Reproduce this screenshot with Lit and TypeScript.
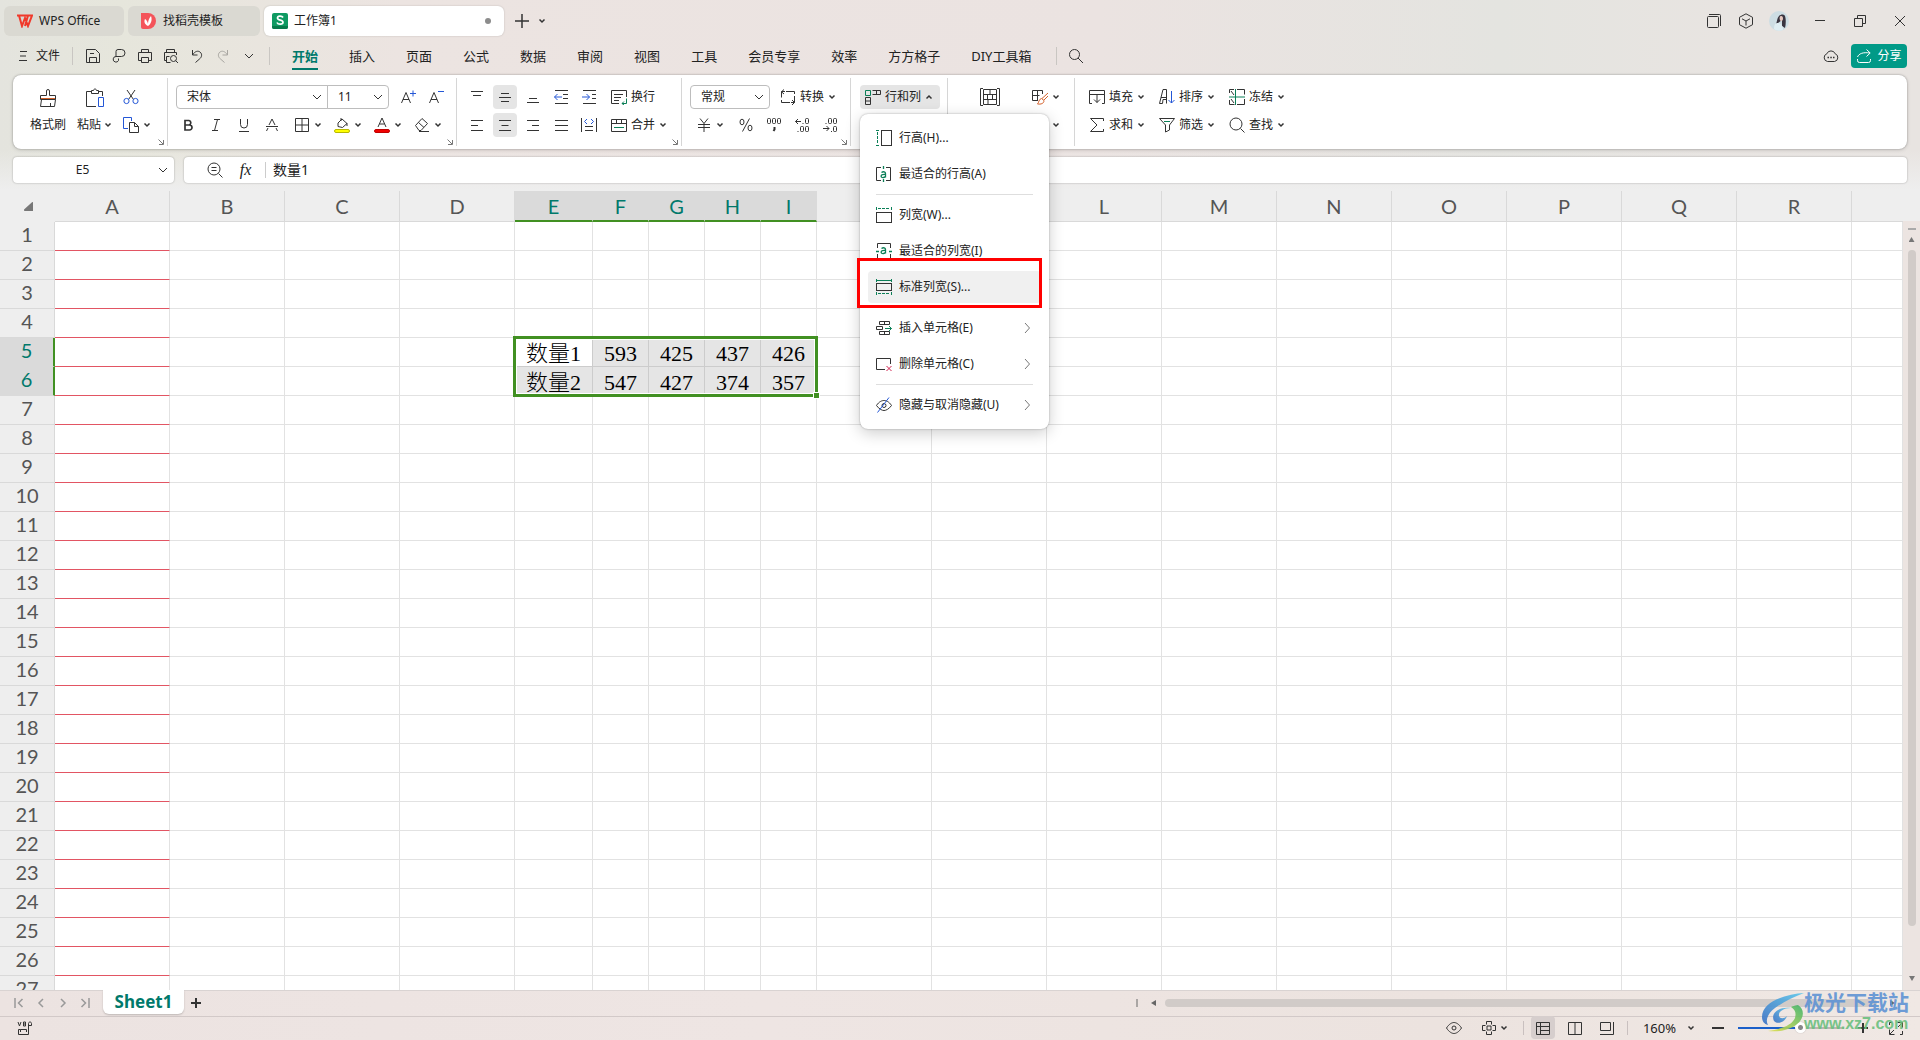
import { LitElement, html, svg, css, nothing } from "lit";
import { customElement, property } from "lit/decorators.js";
import { classMap } from "lit/directives/class-map.js";

const D = "#333";
const BLUE = "#2457d6";
const GREEN = "#0b7f57";

/** Line icons; every entry is drawn on a grid of `size` pixels (16 unless named). */
const ICONS: Record<string, { size?: number; art: unknown }> = {
  save: { art: svg`<path d="M1.5 1.5h9l4 4v9h-13zM4.500 14V9.500h7V14M5 5.500h4"/>` },
  pen: { art: svg`<path d="M5 8.500V3.500a2 2 0 0 1 2-2h3.500a3.200 3.200 0 0 1 0 7H5a2.800 2.800 0 1 0 2.500 4V10.500"/>` },
  print: { art: svg`<path d="M4.500 4.500v-3h7v3M4 12.500H1.500v-8h13v8H12M4.500 9.500h7v5h-7z"/>` },
  preview: { art: svg`<path d="M3.500 4.500v-3h8v3M4 12.500H1.500v-8h12V7M3.500 8.500h3M3.500 8.500v6h4"/><circle cx="10.500" cy="10.500" r="3"/><path d="M12.700 12.700l2.300 2.300"/>` },
  undo: { art: svg`<path d="M3.500 2v5h5M3.500 7C6 3 9 2.500 11 4c2.800 2.200 1.500 5.500-.5 7L6.500 14.500"/>` },
  redo: { art: svg`<path d="M12.500 2v5h-5M12.500 7C10 3 7 2.500 5 4c-2.800 2.200-1.500 5.500.5 7l4 3.500"/>` },
  down: { size: 10, art: svg`<path d="M1 3l4 4 4-4"/>` },
  caret: { size: 8, art: svg`<path d="M1.500 2.500L4 5l2.500-2.500" stroke-width="1.500"/>` },
  caretUp: { size: 8, art: svg`<path d="M1.500 5.500L4 3l2.500 2.500" stroke-width="1.500"/>` },
  menu: { size: 10, art: svg`<path d="M2 .500h7M2 5h6M1 9.500h8"/>` },
  search: { art: svg`<circle cx="6.500" cy="6.500" r="5"/><path d="M10 10l5 5"/>` },
  plus: { size: 14, art: svg`<path d="M7 0v14M0 7h14" stroke-width="1.500"/>` },
  windows: { art: svg`<rect x="1.500" y="3.500" width="11" height="11" rx="1"/><path d="M3 1.500h10.500a1 1 0 0 1 1 1V13"/>` },
  cube: { art: svg`<path d="M8 .800l6.500 3.500v7.400L8 15.200 1.500 11.700V4.300zM4 5.800l4 2.200 4-2.200M8 8v4.500"/>` },
  min: { size: 12, art: svg`<path d="M1 5.500h10"/>` },
  restore: { size: 12, art: svg`<path d="M.500 3.500h8v8h-8zM3.500 3.500v-3h8v8h-3"/>` },
  close: { size: 12, art: svg`<path d="M1 1l10 10M11 1L1 11"/>` },
  cloud: { art: svg`<path d="M4.500 13.500a4 4 0 0 1-.700-7.700 4.500 4.500 0 0 1 8.400 0 4 4 0 0 1-.700 7.700z"/><path d="M4.500 9.500h1.500M7.300 9.500h1.500M10 9.500h1.500" stroke-width="1.500"/>` },
  share: { art: svg`<path d="M1.500 11v1.500a2 2 0 0 0 2 2h9a2 2 0 0 0 2-2V11M1.500 9C3 5.500 7 4 14 5M10.500 1.500L14.200 5l-3.700 3.500" stroke="#fff"/>` },
  launcher: { size: 6, art: svg`<path d="M.500 .500L5 5M5.500 1v4.500H1" stroke="#777"/>` },
  brush: { size: 20, art: svg`<path d="M8.500 7.500V3a1.500 1.500 0 0 1 3 0v4.500h6v4h-15v-4zM3.500 11.500l-1 7h14l1-7M12.500 15v3"/><path d="M3 10.500h14" stroke="#d4622c"/>` },
  paste: { size: 20, art: svg`<path d="M6 3.500H1.500v15H11M14 3.500h3.500V8M6.500 5.500v-3h2c0-2 3-2 3 0h2v3z"/><path d="M13.500 9.500h5v9h-5z" stroke="${BLUE}"/>` },
  cut: { art: svg`<path d="M4 1l6.500 9.500M12 1L5.500 10.500"/><circle cx="3.500" cy="12" r="2.600" stroke="${BLUE}"/><circle cx="12.500" cy="12" r="2.600" stroke="${BLUE}"/>` },
  copy: { art: svg`<path d="M5 11.500H.500V.500h8V4" stroke="${BLUE}"/><path d="M6.500 5.500h5l4 4v6h-9zM11.500 5.500v4h4"/>` },
  fontUp: { art: svg`<path d="M1.500 14L6 3.500 10.500 14M3 10.500h6"/><path d="M10 4.500h6M13 1.500v6" stroke="${BLUE}"/>` },
  fontDown: { art: svg`<path d="M1.500 14L6 3.500 10.500 14M3 10.500h6"/><path d="M10 2.500h6" stroke="${BLUE}"/>` },
  bold: { art: svg`<path d="M5 3.500h4a2.300 2.300 0 0 1 0 4.500H5zM5 8h4.500a2.500 2.500 0 0 1 0 5H5z" stroke-width="1.700"/>` },
  italic: { art: svg`<path d="M6 2.500h6M4 13.500h6M9.500 2.500l-3 11"/>` },
  underline: { art: svg`<path d="M4.500 2v5.500a3.500 3.500 0 0 0 7 0V2M3 14.500h10"/>` },
  strike: { art: svg`<path d="M2 9.500h12M5 8l3-6 3 6M4 11l-1.500 3M12 11l1.500 3"/>` },
  border: { art: svg`<path d="M1.500 1.500h13v13h-13zM8 1.500v13M1.500 8h13"/>` },
  fill: { art: svg`<path d="M4 6l4-4 5 4.500-4.500 4-4.500-1zM7 1v3M13 6v3"/><rect x=".500" y="12.500" width="15" height="3" rx="1.500" fill="#ff0" stroke="#b8b800"/>` },
  color: { art: svg`<path d="M4 10l4-9 4 9M5.500 7h5"/><rect x=".500" y="12.500" width="15" height="3" rx="1.500" fill="#f00000" stroke="#c00000"/>` },
  eraser: { art: svg`<path d="M1.500 8.500l6.500-7 5.500 5-6.500 7H5zM4.500 5.500l5.500 5M5 14.500h10"/>` },
  vTop: { art: svg`<path d="M2 2.500h12M4 6.500h8"/>` },
  vMid: { art: svg`<path d="M4 4.500h8M2 8.500h12M4 12.500h8"/>` },
  vBot: { art: svg`<path d="M4 9.500h8M2 13.500h12"/>` },
  outdent: { art: svg`<path d="M2 1.500h13M10 5.500h5M10 9.500h5M2 14.500h13"/><path d="M9 8H1.500M4.500 5L1.500 8l3 3" stroke="${BLUE}"/>` },
  indent: { art: svg`<path d="M2 1.500h13M11 5.500h4M11 9.500h4M2 14.500h13"/><path d="M1 8h7.500M5.500 5l3 3-3 3" stroke="${BLUE}"/>` },
  left: { art: svg`<path d="M2 3.500h12M2 8.500h7M2 13.500h12"/>` },
  center: { art: svg`<path d="M2 3.500h12M4.500 8.500h7M2 13.500h12"/>` },
  right: { art: svg`<path d="M2 3.500h12M7 8.500h7M2 13.500h12"/>` },
  justify: { art: svg`<path d="M2 3.500h13M2 8.500h13M2 13.500h13"/>` },
  spread: { art: svg`<path d="M.500 1v14M15.500 1v14M4 9.500h8M4 13.500h8"/><path d="M6 2L3.500 4.500 6 7M10 2l2.500 2.500L10 7" stroke="${BLUE}"/>` },
  wrap: { art: svg`<path d="M15.500 8V1.500h-15v13H8M3 5.500h9M3 8.500h7M3 11.500h5"/><path d="M15.500 9.500v5H11M13 12.500l-2 2 2 1.500" stroke="${GREEN}"/>` },
  merge: { art: svg`<path d="M.500 2.500h15v12h-15zM.500 6.500h15M5.500 2.500v4M10.500 2.500v4"/><path d="M3 10.500h10" stroke="${GREEN}"/>` },
  convert: { art: svg`<path d="M1.500 8.500v-6H5M14.500 7v6.500H11M4 .500L1.500 2.800 4 5M6 2.500h8.500V5M12 16l2.500-2.500L12 11M10 13.500H1.500V11"/>` },
  yen: { art: svg`<path d="M4 1.500l4 5 4-5M2 7.500h12M2 10.500h12M8 6.500V15"/>` },
  percent: { art: svg`<ellipse cx="4" cy="5" rx="2" ry="2.800"/><ellipse cx="12" cy="11" rx="2" ry="2.800"/><path d="M11.500 1.500L4.500 14.500"/>` },
  thousand: { art: svg`<rect x="1.500" y="1.500" width="3" height="5" rx="1"/><rect x="6.500" y="1.500" width="3" height="5" rx="1"/><rect x="11.500" y="1.500" width="3" height="5" rx="1"/><path d="M8.500 10v2.500l-1 1.500" stroke-width="2"/>` },
  decLess: { art: svg`<path d="M7 4.500H1.500M4 2L1.500 4.500 4 7M8.500 6.500h1M3.500 14.500h1"/><rect x="11.500" y="1.500" width="3" height="5" rx="1"/><rect x="6.500" y="9.500" width="3" height="5" rx="1"/><rect x="11.500" y="9.500" width="3" height="5" rx="1"/>` },
  decMore: { art: svg`<path d="M1 11.500h6M4.500 9L7 11.500 4.500 14M3.500 6.500h1M9 14.500h1"/><rect x="6.500" y="1.500" width="3" height="5" rx="1"/><rect x="11.500" y="1.500" width="3" height="5" rx="1"/><rect x="11.500" y="9.500" width="3" height="5" rx="1"/>` },
  rowcol: { art: svg`<path d="M7.500 1.500h8v4h-8M11.500 1.500v4M.500 8.500h5v7h-5zM.500 12h5"/><path d="M.500 1.500h5v5h-5z" stroke="${GREEN}"/>` },
  tableTool: { size: 20, art: svg`<path d="M3 1.500H.500v17H3M17 1.500h2.500v17H17M3.500 2.500h13v15h-13zM3.500 7.500h13M3.500 12.500h13M10 2.500v5M7.500 7.500v5M12.500 7.500v5M8 12.500v5"/>` },
  format: { art: svg`<path d="M6 11.500H.500v-10h10V5M.500 6.500h7M5.500 1.500v10"/><path d="M16 4l-6 5.500M16 7l-4 4M9.500 9.500l2.500 2c0 3-3 4-6.500 3.500 1.500-1 1-5 4-5.500z" stroke="#d4622c"/>` },
  fillDown: { art: svg`<path d="M.500 5.500v-4h15v4zM3 14.500H.500v-9h15v9H13M8 5.500v8M5 10.500l3 3 3-3"/>` },
  sum: { art: svg`<path d="M14.500 4V1.500h-13L8 8l-6.500 6.500h13V12"/>` },
  sort: { art: svg`<path d="M.500 14.500L4 .500h3.500v14M2 8.500h5.500M.500 14.500h3l.500-4h3.500"/><path d="M12.500 2v12M9.500 11l3 3 3-3" stroke="${BLUE}"/>` },
  filter: { art: svg`<path d="M.500 1.500h15L10.500 8v5l-4 2V8z"/><path d="M5 4.500h6" stroke="${GREEN}"/>` },
  freeze: { art: svg`<path d="M.500 4V.500H5M8 .500h7.500v5M.500 11v4.500h5M8 15.500h7.500V10M2 2l3 4M2 10l3 4"/><path d="M6.500 0v16M0 8h16" stroke="${GREEN}"/>` },
  find: { art: svg`<circle cx="7" cy="7" r="6"/><path d="M11.500 11.500l4 4"/>` },
  fxZoom: { art: svg`<circle cx="7" cy="7" r="6"/><path d="M4.500 5.500h5M4.500 8.500h5M11.500 11.500l4 4"/>` },
  rowHeight: { art: svg`<rect x="5.500" y=".500" width="10" height="15"/><path d="M1.500 2v12" stroke="${GREEN}" stroke-dasharray="3 1"/><path d="M0 .500h3M0 15.500h3" stroke="${GREEN}"/>` },
  rowFit: { art: svg`<path d="M5 1.500H.500v13H5M10 1.500h4.500v13H10"/><path d="M7.500 0v3M7.500 13v3M5.500 6.500c2-1.500 4-.500 4 1v4M9.500 8.500c-6-.500-5 3.500-2 3 1.500 0 2-1.500 2-1.500" stroke="${GREEN}" stroke-width="1.300"/>` },
  colWidth: { art: svg`<rect x=".500" y="5.500" width="15" height="10"/><path d="M2 1.500h12" stroke="${GREEN}" stroke-dasharray="3 1"/><path d="M.500 0v3M15.500 0v3" stroke="${GREEN}"/>` },
  colFit: { art: svg`<path d="M1.500 5V.500h13V5M1.500 11v4.500h13V11"/><path d="M0 8.500h3M13 8.500h3M5.500 5.500c2-1.500 4-.500 4 1v4M9.500 7.500c-6-.500-5 3.500-2 3 1.500 0 2-1.500 2-1.500" stroke="${GREEN}" stroke-width="1.300"/>` },
  colStd: { art: svg`<rect x=".500" y="4.500" width="15" height="7"/><path d="M0 1.500h16M.500 0v3M15.500 0v3M.500 13v3M15.500 13v3" stroke="${GREEN}"/><path d="M2 14.500h12" stroke="${GREEN}" stroke-dasharray="3 1"/>` },
  insertCell: { art: svg`<path d="M3.500 1.500h10v3h-10zM8.500 1.500v3M.500 6.500h6v3h-6zM3.500 11.500h10v3h-10zM8.500 11.500v3"/><path d="M9 8.500h6.500M13 6l2.500 2.500L13 11" stroke="${GREEN}"/>` },
  deleteCell: { art: svg`<path d="M9 13.500H.500v-11h14V8"/><path d="M10.500 10l5 5M15.500 10l-5 5" stroke="#d02450"/>` },
  hide: { art: svg`<path d="M.500 8.500C3 4.500 6 3.500 8 3.500s5 1 7.500 5C13 12 10 13.500 8 13.500S3 12 .500 8.500z"/><circle cx="8" cy="8.500" r="2"/><path d="M13 .500L1.500 15.500" stroke="${BLUE}"/>` },
  arrow: { size: 10, art: svg`<path d="M3 0l4.500 5L3 10" stroke="#777"/>` },
  first: { size: 10, art: svg`<path d="M1 0v10M8.500 1l-4 4 4 4" stroke="#999" stroke-width="1.500"/>` },
  prev: { size: 10, art: svg`<path d="M7 1L3 5l4 4" stroke="#999" stroke-width="1.500"/>` },
  next: { size: 10, art: svg`<path d="M3 1l4 4-4 4" stroke="#999" stroke-width="1.500"/>` },
  last: { size: 10, art: svg`<path d="M9 0v10M1.500 1l4 4-4 4" stroke="#999" stroke-width="1.500"/>` },
  add: { size: 10, art: svg`<path d="M5 0v10M0 5h10" stroke-width="2"/>` },
  minus: { size: 12, art: svg`<path d="M0 6h12" stroke-width="2"/>` },
  macro: { art: svg`<path d="M2 2l1.500 4L5 2M7.500 2v4h2V2zM7.500 4h2M12.500 14.500V3.500c0-2 3-2 3 0v2h-3M4.500 9.500h-2v5h10M4.500 12v-2.500h6v2.500"/>` },
  eye: { art: svg`<path d="M.500 8C3 4 6 2.500 8 2.500S13 4 15.500 8C13 12 10 13.500 8 13.500S3 12 .500 8z"/><circle cx="8" cy="8" r="2"/>` },
  cross: { art: svg`<path d="M5.500 4.500v-3h5v3M5.500 11.500v3h5v-3M4.500 5.500h-3v5h3M11.500 5.500h3v5h-3M6 6h4v4H6z"/>` },
  viewNormal: { art: svg`<path d="M1.500 2.500h13v12h-13zM1.500 6.500h13M5.500 2.500v12M5.500 10.500h9"/>` },
  viewPage: { art: svg`<path d="M1.500 2.500h13v12h-13zM8 2.500v12"/>` },
  viewBreak: { art: svg`<path d="M1.500 2.500h10v8h-10zM14.500 2v12.500H1"/>` },
  full: { art: svg`<path d="M9.500 2.500h5v5M14 3l-4 4M6.500 14.500h-5v-5M2 14l4-4M1.500 5V2.500H4M14.500 11v3.500H12"/>` },
};

const icon = (name: string) => {
  const { size = 16, art } = ICONS[name];
  return html`<svg class="icon" width=${size} height=${size} viewBox="0 0 ${size} ${size}" fill="none" stroke=${D} aria-hidden="true">${art}</svg>`;
};

const base = css`
  * { box-sizing: border-box; }
  button, input, select { font: inherit; color: inherit; border: 0; background: none; padding: 0; margin: 0; outline: 0; }
  button { display: flex; align-items: center; justify-content: center; white-space: nowrap; }
  .icon { display: block; flex: none; }
  .grow { flex: 1; }
`;

@customElement("title-bar")
class TitleBar extends LitElement {
  static styles = [base, css`
    :host { display: flex; align-items: center; padding: 6px 0 0 4px; height: 36px; }
    .tabs { display: flex; gap: 4px; }
    .tab { display: flex; align-items: center; justify-content: flex-start; gap: 7px; height: 30px; border-radius: 6px; padding: 0 8px 0 13px; background: #dad9d2; }
    .home { width: 120px; gap: 6px; }
    .templates { width: 132px; }
    .book { width: 240px; gap: 6px; padding-left: 8px; padding-right: 13px; background: #fff; box-shadow: 0 0 2px #0003; }
    .dot { width: 6px; height: 6px; border-radius: 50%; background: #8c8c8c; }
    .new { margin: 0 9px 0 11px; }
    .window { display: flex; align-items: center; }
    .window button { width: 32px; height: 24px; }
    .window .wide { width: 40px; }
    .window .avatar { margin-right: 4px; width: 34px; }
  `];
  render() {
    return html`
      <div class="tabs">
        <button class="tab home">
          <svg width="16" height="14" viewBox="0 0 16 14" fill="none" stroke="#f0392b" stroke-width="2" aria-hidden="true"><path d="M0 1.500h11M2 1.500l3 10.500 3-8 3 8 4-10.500h-4L8 12"/></svg>
          WPS Office
        </button>
        <button class="tab templates">
          <svg width="15" height="16" viewBox="0 0 15 16" aria-hidden="true"><path d="M0 0h7a8 8 0 0 1 0 16H2a2 2 0 0 1-2-2z" fill="#f4545a"/><path d="M7 13C3 11 3 8 4 6c1.500 1 2.500 2.500 3 5 0-3 1-6 3-8 1.500 4 0 8-3 10z" fill="#fff"/></svg>
          找稻壳模板
        </button>
        <button class="tab book">
          <svg width="16" height="16" viewBox="0 0 16 16" fill="none" aria-hidden="true"><rect width="16" height="16" rx="2" fill="#0f9a62"/><path d="M0 13h16v1a2 2 0 0 1-2 2H2a2 2 0 0 1-2-2z" fill="#087a4b"/><path d="M11 4.500C10 2.500 5.500 2.500 5.500 5c0 2.800 5.500 1.500 5.500 4.200 0 2.600-5 2.600-6 .300" stroke="#fff" stroke-width="1.700"/></svg>
          工作簿1<span class="grow"></span><span class="dot"></span>
        </button>
      </div>
      <button class="new" aria-label="新建">${icon("plus")}</button>
      <button aria-label="标签列表">${icon("caret")}</button>
      <span class="grow"></span>
      <div class="window">
        <button aria-label="窗口">${icon("windows")}</button>
        <button aria-label="应用">${icon("cube")}</button>
        <button class="avatar" aria-label="账户">
          <svg width="20" height="20" viewBox="0 0 20 20" aria-hidden="true"><circle cx="10" cy="10" r="10" fill="#cddde3"/><path d="M10 5c2-2 5-2 6 0 1 3 1 8 0 12l-3-2V9l-4 3-2 1c1-2 1-6 3-8z" fill="#3a3540"/><path d="M11 5.500c2-1 3 0 3 2s-1 2.500-2 2.500-2-2.500-1-4.500z" fill="#e6c8c0"/><path d="M5 18c0-4 1-6 4-6 3 0 5 3 5 7-3 1-7 1-9-1z" fill="#dfeef3"/></svg>
        </button>
        <button class="wide" aria-label="最小化">${icon("min")}</button>
        <button class="wide" aria-label="还原">${icon("restore")}</button>
        <button class="wide" aria-label="关闭">${icon("close")}</button>
      </div>`;
  }
}

@customElement("menu-bar")
class MenuBar extends LitElement {
  static styles = [base, css`
    :host { display: flex; align-items: center; height: 39px; padding: 0 13px 0 18px; font-size: 13px; }
    .file { gap: 8px; font-size: 12px; margin-right: 12px; }
    .rule { width: 1px; height: 18px; background: #c9c6c2; }
    .quick { display: flex; padding: 0 7px; }
    .quick button { width: 26px; height: 24px; }
    .faded { opacity: .35; }
    .tabs { display: flex; gap: 31px; margin: 0 25px 0 22px; }
    .tab { height: 28px; border-top: 2px solid transparent; border-bottom: 2px solid transparent; }
    .active { color: #00796b; font-weight: 700; border-bottom-color: #00796b; }
    .search { margin-left: 11px; }
    .share { width: 56px; height: 24px; margin-left: 12px; gap: 5px; border-radius: 4px; background: #009a87; color: #fff; font-size: 12px; }
  `];
  render() {
    const quick = ["save", "pen", "print", "preview", "undo", "redo", "down"];
    const names = ["保存", "输出", "打印", "打印预览", "撤销", "恢复", "更多"];
    const tabs = ["开始", "插入", "页面", "公式", "数据", "审阅", "视图", "工具", "会员专享", "效率", "方方格子", "DIY工具箱"];
    return html`
      <button class="file">${icon("menu")}文件</button>
      <span class="rule"></span>
      <div class="quick">${quick.map((q, i) => html`<button class=${classMap({ faded: q === "redo" })} aria-label=${names[i]}>${icon(q)}</button>`)}</div>
      <span class="rule"></span>
      <nav class="tabs">${tabs.map((t, i) => html`<button class=${classMap({ tab: true, active: i === 0 })}>${t}</button>`)}</nav>
      <span class="rule"></span>
      <button class="search" aria-label="搜索">${icon("search")}</button>
      <span class="grow"></span>
      <button aria-label="云服务">${icon("cloud")}</button>
      <button class="share">${icon("share")}分享</button>`;
  }
}

@customElement("row-column-menu")
class RowColumnMenu extends LitElement {
  static styles = [base, css`
    :host { display: block; width: 189px; padding: 6px 8px; border-radius: 8px; background: #fff; box-shadow: 0 0 2px #0005, 0 4px 16px #0003; }
    .item { width: 100%; height: 32px; padding: 0 9px 0 8px; gap: 7px; justify-content: flex-start; border-radius: 4px; }
    .hover { background: #f0f0f0; }
    .slot { height: 36px; padding: 2px 0; }
    .rule { height: 1px; margin: 2px 8px; background: #dedede; }
    .marker { position: absolute; left: -3px; top: 144px; width: 185px; height: 50px; border: 3px solid #f00; pointer-events: none; }
  `];
  render() {
    const items: ([string, string, boolean?] | null)[] = [
      ["rowHeight", "行高(H)..."], ["rowFit", "最适合的行高(A)"], null,
      ["colWidth", "列宽(W)..."], ["colFit", "最适合的列宽(I)"], ["colStd", "标准列宽(S)..."], null,
      ["insertCell", "插入单元格(E)", true], ["deleteCell", "删除单元格(C)", true], null,
      ["hide", "隐藏与取消隐藏(U)", true],
    ];
    return html`${items.map((it) => it === null
      ? html`<div class="rule"></div>`
      : html`<div class="slot"><button class=${classMap({ item: true, hover: it[0] === "colStd" })}>${icon(it[0])}${it[1]}${it[2] ? html`<span class="grow"></span>${icon("arrow")}` : nothing}</button></div>`)}
      <div class="marker"></div>`;
  }
}

@customElement("tool-ribbon")
class ToolRibbon extends LitElement {
  static styles = [base, css`
    :host { display: flex; height: 74px; margin: 0 13px; border-radius: 8px; background: #fff; box-shadow: 0 0 2px #0005, 0 1px 4px #0002; position: relative; z-index: 2; font-size: 12px; }
    .group { position: relative; display: flex; padding: 10px 0; border-right: 1px solid transparent; border-image: linear-gradient(transparent 4px, #d6d6d6 4px, #d6d6d6 70px, transparent 70px) 1; }
    .group.end { border: 0; }
    .rows { display: flex; flex-direction: column; gap: 4px; }
    .row { display: flex; align-items: center; height: 24px; }
    .btn { width: 24px; height: 24px; margin: 0 2px; border-radius: 4px; }
    .on { background: #e5e5e5; }
    .split { width: 40px; height: 24px; padding-left: 3px; gap: 4px; }
    .label { gap: 4px; height: 24px; justify-content: flex-start; }
    .launch { position: absolute; right: 3px; bottom: 4px; }
    .big { flex-direction: column; gap: 4px; height: 52px; margin-right: 11px; }
    .big .cap { display: flex; align-items: center; gap: 3px; height: 24px; }
    .pic { display: flex; align-items: center; height: 26px; margin-bottom: -2px; }
    .clip { padding-left: 17px; width: 155px; }
    .font { width: 289px; padding-left: 6px; }
    .align { width: 225px; padding-left: 6px; }
    .number { width: 169px; padding-left: 6px; }
    .cells { width: 97px; padding-left: 9px; z-index: 1; }
    .style { width: 127px; padding-left: 28px; }
    .edit { padding-left: 14px; }
    .edit .label { width: 70px; }
    .after { margin-left: 8px; }
    .combo { display: grid; grid-template-columns: 1fr 20px; align-items: center; height: 24px; border: 1px solid #bdbdbd; border-radius: 4px; }
    .combo select { grid-area: 1 / 1 / 2 / 3; height: 22px; appearance: none; padding-left: 10px; }
    .combo .icon { grid-area: 1 / 2; justify-self: center; pointer-events: none; }
    .family { width: 152px; margin-left: 2px; border-radius: 4px 0 0 4px; }
    .size { width: 62px; margin: 0 5px 0 -1px; border-radius: 0 4px 4px 0; }
    .kind { width: 80px; margin: 0 10px 0 2px; }
    .money { margin-right: 4px; }
    .mid { margin-left: 20px; }
    .open { width: 80px; padding-left: 5px; border-radius: 4px; }
    .anchor { position: relative; }
    .popup { position: absolute; left: 0; top: 29px; }
  `];
  btn(name: string, label: string, on = false) {
    return html`<button class=${classMap({ btn: true, on })} aria-label=${label}>${icon(name)}</button>`;
  }
  split(name: string, label: string) {
    return html`<button class="split" aria-label=${label}>${icon(name)}${icon("caret")}</button>`;
  }
  label(name: string, text: string, caret = true) {
    return html`<button class="label">${icon(name)}${text}${caret ? icon("caret") : nothing}</button>`;
  }
  launcher(label: string) {
    return html`<button class="launch" aria-label=${label}>${icon("launcher")}</button>`;
  }
  render() {
    return html`
      <div class="group clip">
        <button class="big"><span class="pic">${icon("brush")}</span><span class="cap">格式刷</span></button>
        <button class="big"><span class="pic">${icon("paste")}</span><span class="cap">粘贴${icon("caret")}</span></button>
        <div class="rows">
          <div class="row"><button aria-label="剪切">${icon("cut")}</button></div>
          <div class="row"><button class="label" aria-label="复制">${icon("copy")}${icon("caret")}</button></div>
        </div>
        ${this.launcher("剪贴板")}
      </div>
      <div class="group font">
        <div class="rows">
          <div class="row">
            <span class="combo family"><select aria-label="字体"><option>宋体</option></select>${icon("down")}</span>
            <span class="combo size"><select aria-label="字号"><option>11</option></select>${icon("down")}</span>
            ${this.btn("fontUp", "增大字号")}${this.btn("fontDown", "减小字号")}
          </div>
          <div class="row">
            ${this.btn("bold", "加粗")}${this.btn("italic", "倾斜")}${this.btn("underline", "下划线")}${this.btn("strike", "删除线")}
            ${this.split("border", "边框")}${this.split("fill", "填充颜色")}${this.split("color", "字体颜色")}${this.split("eraser", "清除")}
          </div>
        </div>
        ${this.launcher("字体设置")}
      </div>
      <div class="group align">
        <div class="rows">
          <div class="row">
            ${this.btn("vTop", "顶端对齐")}${this.btn("vMid", "垂直居中", true)}${this.btn("vBot", "底端对齐")}${this.btn("outdent", "减少缩进")}${this.btn("indent", "增加缩进")}
            <span class="after">${this.label("wrap", "换行", false)}</span>
          </div>
          <div class="row">
            ${this.btn("left", "左对齐")}${this.btn("center", "水平居中", true)}${this.btn("right", "右对齐")}${this.btn("justify", "两端对齐")}${this.btn("spread", "分散对齐")}
            <span class="after">${this.label("merge", "合并")}</span>
          </div>
        </div>
        ${this.launcher("对齐设置")}
      </div>
      <div class="group number">
        <div class="rows">
          <div class="row">
            <span class="combo kind"><select aria-label="数字格式"><option>常规</option></select>${icon("down")}</span>
            ${this.label("convert", "转换")}
          </div>
          <div class="row">
            <span class="money">${this.split("yen", "货币")}</span>
            ${this.btn("percent", "百分比")}${this.btn("thousand", "千位分隔")}${this.btn("decLess", "增加小数位")}${this.btn("decMore", "减少小数位")}
          </div>
        </div>
        ${this.launcher("数字设置")}
      </div>
      <div class="group cells">
        <div class="anchor">
          <button class="label open on">${icon("rowcol")}行和列${icon("caretUp")}</button>
          <row-column-menu class="popup"></row-column-menu>
        </div>
      </div>
      <div class="group style">
        <div class="rows">
          <div class="row">${this.btn("tableTool", "表格工具")}<span class="mid">${this.split("format", "条件格式")}</span></div>
          <div class="row">${this.btn("tableTool", "表格样式")}<span class="mid">${this.split("format", "单元格样式")}</span></div>
        </div>
      </div>
      <div class="group edit end">
        <div class="rows">
          <div class="row">${this.label("fillDown", "填充")}${this.label("sort", "排序")}${this.label("freeze", "冻结")}</div>
          <div class="row">${this.label("sum", "求和")}${this.label("filter", "筛选")}${this.label("find", "查找")}</div>
        </div>
      </div>`;
  }
}

@customElement("formula-bar")
class FormulaBar extends LitElement {
  static styles = [base, css`
    :host { display: flex; gap: 10px; margin: 8px 13px; height: 26px; }
    .box { display: flex; align-items: center; border-radius: 4px; background: #fff; box-shadow: 0 0 2px #0005; }
    .name { width: 161px; padding: 0 6px 0 0; }
    .name input { flex: 1; min-width: 0; text-align: center; padding-right: 6px; }
    .entry { flex: 1; padding-left: 23px; }
    .fx { font: italic 16px "Liberation Serif", serif; margin: 0 11px 0 14px; width: 17px; height: 20px; }
    .rule { width: 1px; height: 16px; background: #ccc; }
    .value { flex: 1; min-width: 0; padding-left: 7px; font-size: 14px; }
  `];
  render() {
    return html`
      <div class="box name"><input aria-label="名称框" value="E5">${icon("down")}</div>
      <div class="box entry">
        <button aria-label="查看公式">${icon("fxZoom")}</button>
        <button class="fx">fx</button>
        <span class="rule"></span>
        <input class="value" aria-label="编辑栏" value="数量1">
      </div>`;
  }
}

@customElement("sheet-grid")
class SheetGrid extends LitElement {
  @property({ attribute: false }) columns = [
    ...["A", "B", "C", "D"].map((name) => ({ name, width: 115 })),
    { name: "E", width: 78 },
    ...["F", "G", "H", "I"].map((name) => ({ name, width: 56 })),
    ..."JKLMNOPQR".split("").map((name) => ({ name, width: 115 })),
  ];
  @property({ attribute: false }) values: Record<number, string[]> = {
    5: ["数量1", "593", "425", "437", "426"],
    6: ["数量2", "547", "427", "374", "357"],
  };
  static styles = [base, css`
    :host { display: flex; min-height: 0; overflow: hidden; background: #eee; }
    .view { flex: 1; min-width: 0; position: relative; overflow: hidden; }
    table { width: 100%; table-layout: fixed; border-collapse: separate; border-spacing: 0; }
    .gutter { width: 55px; }
    th { font: 20px/24px Lato, sans-serif; color: #555; padding: 0; background: #eee; }
    thead th { height: 31px; border-right: 1px solid #d9d9d9; border-bottom: 1px solid #d9d9d9; }
    thead .corner { border-color: transparent; }
    thead .rest { border-right: 0; }
    thead .picked { background: #dadada; color: #00796b; border-right-color: #dadada; border-bottom: 2px solid #419022; }
    tbody th { height: 29px; padding-bottom: 4px; border-right: 1px solid #d9d9d9; border-bottom: 1px solid #d9d9d9; }
    tbody .picked { background: #dadada; color: #00796b; border-right: 2px solid #419022; border-bottom-color: #dadada; }
    td { height: 29px; padding: 4px 0 0; background: #fff; border-right: 1px solid #e2e2e2; border-bottom: 1px solid #e2e2e2; text-align: center; font: 22px/24px "Liberation Serif", "Noto Sans CJK SC", serif; color: #000; white-space: nowrap; }
    .lined { border-bottom-color: #e25563; }
    .inside { background: #e5e5e5; border-color: #ccc; font-weight: 300; }
    .current { background: #fff; }
    .range { position: absolute; left: 513px; top: 145px; width: 305px; height: 61px; border: 3px solid #419022; box-shadow: inset 0 0 0 1px #fff; }
    .handle { position: absolute; right: -5px; bottom: -5px; width: 7px; height: 7px; border: 1px solid #fff; background: #419022; }
    .mark { display: block; margin-left: 24px; }
    .scroll { width: 17px; margin-top: 30px; background: #ece4e1; display: flex; flex-direction: column; align-items: center; }
    .bar { width: 8px; height: 2px; margin: 7px 0; background: #aaa; }
    .thumb { flex: 1; width: 8px; margin: 8px 0 50px; border-radius: 4px; background: #d1cbc8; }
    .tri { width: 6px; height: 5px; background: #777; clip-path: polygon(50% 0, 100% 100%, 0 100%); }
    .flip { transform: rotate(180deg); margin-bottom: 9px; }
  `];
  render() {
    const picked = (name: string) => "EFGHI".includes(name);
    const rows = Array.from({ length: 27 }, (_, i) => i + 1);
    return html`
      <div class="view">
        <table>
          <colgroup><col class="gutter">${this.columns.map((c) => html`<col style="width:${c.width}px">`)}<col></colgroup>
          <thead><tr>
            <th class="corner"><svg class="mark" width="9" height="9" viewBox="0 0 9 9" aria-hidden="true"><path d="M9 0v9H1a1 1 0 0 1-.700-1.700L8 .300z" fill="#777"/></svg></th>
            ${this.columns.map((c) => html`<th scope="col" class=${classMap({ picked: picked(c.name) })}>${c.name}</th>`)}
            <th class="rest"></th>
          </tr></thead>
          <tbody>${rows.map((r) => html`<tr>
            <th scope="row" class=${classMap({ picked: r === 5 || r === 6 })}>${r}</th>
            ${this.columns.map((c, i) => html`<td class=${classMap({
              lined: i === 0,
              inside: !!this.values[r] && picked(c.name),
              current: r === 5 && c.name === "E",
            })}>${this.values[r]?.[i - 4] ?? nothing}</td>`)}<td></td>
          </tr>`)}</tbody>
        </table>
        <div class="range"><span class="handle"></span></div>
      </div>
      <div class="scroll"><span class="bar"></span><span class="tri"></span><span class="thumb"></span><span class="tri flip"></span></div>`;
  }
}

@customElement("sheet-tabs")
class SheetTabs extends LitElement {
  static styles = [base, css`
    :host { display: flex; align-items: flex-start; height: 26px; border-top: 1px solid #d9d3d2; }
    .nav { display: flex; gap: 12px; height: 24px; padding: 0 13px 0 14px; align-items: center; }
    .sheet { width: 81px; height: 24px; margin-top: -1px; background: #fff; border-radius: 0 0 6px 6px; box-shadow: 0 1px 2px #0003; color: #00796b; font: 700 17px/24px "Noto Sans", sans-serif; }
    .new { height: 24px; margin-left: 7px; }
    .scroll { display: flex; align-items: center; height: 24px; width: 784px; padding-right: 16px; }
    .stop { width: 2px; height: 8px; background: #aaa6a4; }
    .tri { width: 5px; height: 6px; margin: 0 9px 0 13px; background: #666; clip-path: polygon(0 50%, 100% 0, 100% 100%); }
    .thumb { width: 712px; height: 8px; border-radius: 4px; background: #d1cbc8; }
    .back { transform: rotate(180deg); }
  `];
  render() {
    return html`
      <div class="nav">
        <button aria-label="第一张">${icon("first")}</button><button aria-label="上一张">${icon("prev")}</button>
        <button aria-label="下一张">${icon("next")}</button><button aria-label="最后一张">${icon("last")}</button>
      </div>
      <button class="sheet">Sheet1</button>
      <button class="new" aria-label="新建工作表">${icon("add")}</button>
      <span class="grow"></span>
      <div class="scroll"><span class="stop"></span><span class="tri"></span><span class="thumb"></span><span class="tri back"></span></div>`;
  }
}

@customElement("status-bar")
class StatusBar extends LitElement {
  static styles = [base, css`
    :host { display: flex; align-items: center; height: 24px; padding: 0 16px 2px; border-top: 1px solid #d2c9c8; }
    .pair { gap: 3px; margin: 0 15px 0 19px; }
    .rule { width: 1px; height: 14px; background: #c9c0bf; }
    .views { display: flex; gap: 8px; margin: 0 8px 0 7px; }
    .views button { width: 24px; height: 23px; border-radius: 4px; }
    .views .on { background: #d6cecd; }
    .zoom { gap: 11px; margin: 0 17px 0 15px; font-size: 13px; }
    input { appearance: none; width: 106px; height: 12px; margin: 0 14px 0 14px; background: linear-gradient(90deg, #1b5fc9 60%, #bdb5b3 60%) center / 100% 2px no-repeat; }
    input::-webkit-slider-thumb { appearance: none; width: 11px; height: 11px; border-radius: 50%; background: radial-gradient(#888 0 2px, #fff 3px); box-shadow: 0 0 1px #0006; }
    .full { margin-left: 20px; }
  `];
  render() {
    return html`
      <button aria-label="宏">${icon("macro")}</button>
      <span class="grow"></span>
      <button aria-label="护眼模式">${icon("eye")}</button>
      <button class="pair" aria-label="阅读模式">${icon("cross")}${icon("caret")}</button>
      <span class="rule"></span>
      <div class="views">
        <button class="on" aria-label="普通视图">${icon("viewNormal")}</button>
        <button aria-label="页面布局">${icon("viewPage")}</button>
        <button aria-label="分页预览">${icon("viewBreak")}</button>
      </div>
      <span class="rule"></span>
      <button class="zoom">160%${icon("caret")}</button>
      <button aria-label="缩小">${icon("minus")}</button>
      <input type="range" aria-label="缩放" min="0" max="100" value="60">
      <button aria-label="放大">${icon("add")}</button>
      <button class="full" aria-label="全屏">${icon("full")}</button>`;
  }
}

@customElement("site-mark")
class SiteMark extends LitElement {
  static styles = [base, css`
    :host { display: flex; align-items: center; pointer-events: none; opacity: .9; }
    .words { display: flex; flex-direction: column; }
    .top { font: 700 21px/23px "Noto Sans CJK SC", sans-serif; color: #5f93d4; }
    .url { font: 700 16px/22px "Liberation Sans", sans-serif; color: #6cc07f; }
  `];
  render() {
    return html`
      <svg width="42" height="40" viewBox="0 0 42 40" aria-hidden="true">
        <defs>
          <linearGradient id="sea" x1="0" y1="1" x2="1" y2="0"><stop offset="0" stop-color="#3a6fc4"/><stop offset="1" stop-color="#5cc8ec"/></linearGradient>
          <linearGradient id="leaf" x1="0" y1="1" x2="1" y2="0"><stop offset="0" stop-color="#e3e04a"/><stop offset="1" stop-color="#3fb36b"/></linearGradient>
        </defs>
        <path d="M42 0C25 1 0 8 0 24c0 4 2 7 6 8-3-5 0-12 7-17C21 9 32 4 42 0z" fill="url(#sea)"/>
        <path d="M12 28c-4-8 6-15 17-13-8 0-13 4-12 8 1 3 5 3 8 0-2 6-9 9-13 5z" fill="url(#sea)"/>
        <path d="M36 12c8 5 6 16-5 22-8 4-17 5-25 4 14-2 24-6 27-13 1-4 1-8-4-11 2-1 5-2 7-2z" fill="url(#leaf)"/>
      </svg>
      <span class="words"><span class="top">极光下载站</span><span class="url">www.xz7.com</span></span>`;
  }
}

@customElement("app-root")
class AppRoot extends LitElement {
  static styles = [base, css`
    :host {
      display: flex; flex-direction: column; height: 100vh; min-width: 1100px; position: relative; overflow: hidden; cursor: default;
      font: 12px/16px "Noto Sans", "Noto Sans CJK SC", sans-serif; color: #222;
      background:
        linear-gradient(transparent 150px, #eee 190px, #eee 900px, transparent 980px),
        linear-gradient(90deg, #e4e4de 0, #e6e6dc 120px, #ece4e1 400px, #ebe3e1 1100px, #e4e4e0 1500px, #e8e4e1 1720px, #e8e4e1);
    }
    sheet-grid { flex: 1; }
    .foot { background: linear-gradient(90deg, #ece3e1, #eee5e3 40%, #ece3df 75%, #f0e8e4); }
    site-mark { position: absolute; right: 11px; bottom: 5px; }
  `];
  render() {
    return html`
      <title-bar></title-bar>
      <menu-bar></menu-bar>
      <tool-ribbon></tool-ribbon>
      <formula-bar></formula-bar>
      <sheet-grid></sheet-grid>
      <div class="foot"><sheet-tabs></sheet-tabs><status-bar></status-bar></div>
      <site-mark></site-mark>`;
  }
}
